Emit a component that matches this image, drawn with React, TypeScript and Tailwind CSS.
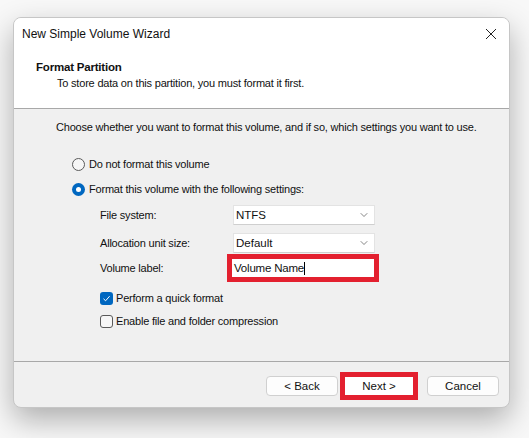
import { ChevronDown } from "lucide-react";

const font = "font-['Liberation_Sans',Arial,sans-serif]";

function Radio({ checked, label }: { checked?: boolean; label: string }) {
  return (
    <div className="flex items-center h-[16px]">
      {checked ? (
        <span className="w-[13px] h-[13px] rounded-full bg-[#0067c0] flex items-center justify-center">
          <span className="w-[5px] h-[5px] rounded-full bg-white" />
        </span>
      ) : (
        <span className="w-[13px] h-[13px] rounded-full border border-[#5a5a5a] bg-[#f6f6f6]" />
      )}
      <span className="ml-[4px]">{label}</span>
    </div>
  );
}

function Check({ checked, label }: { checked?: boolean; label: string }) {
  return (
    <div className="flex items-center h-[16px]">
      {checked ? (
        <span className="w-[13px] h-[13px] rounded-[3px] bg-[#0067c0] flex items-center justify-center">
          <svg width="9" height="9" viewBox="0 0 9 9" fill="none">
            <path d="M1.5 4.8 L3.6 6.8 L7.6 2.2" stroke="white" strokeWidth="1" />
          </svg>
        </span>
      ) : (
        <span className="w-[13px] h-[13px] rounded-[3px] border border-[#5a5a5a] bg-[#f6f6f6]" />
      )}
      <span className="ml-[3px]">{label}</span>
    </div>
  );
}

function Select({ value }: { value: string }) {
  return (
    <div className="w-[142px] h-[20px] bg-white border border-[#e3e3e3] border-b-[#cfcfcf] flex items-center justify-between pl-[2px] pr-[4px]">
      <span className="text-[11.5px] tracking-normal">{value}</span>
      <ChevronDown size={12} strokeWidth={1.3} className="text-[#444]" />
    </div>
  );
}

function Button({ label }: { label: string }) {
  return (
    <div className="w-[72px] h-[20px] rounded-[4px] border border-[#d0d0d0] bg-[#fdfdfd] flex items-center justify-center">
      {label}
    </div>
  );
}

export default function App() {
  return (
    <div className={`w-[529px] h-[438px] bg-[#f8f8f8] pt-[17px] pl-[13px] text-[11px] tracking-[-0.2px] leading-[16px] text-[#111] whitespace-nowrap ${font}`}>
      <div className="w-[497px] h-[391px] rounded-[8px] border border-[#c6c6c6] bg-[#f0f0f0] overflow-hidden flex flex-col shadow-[0_12px_30px_rgba(0,0,0,0.3)]">
        {/* Header */}
        <div className="h-[91px] shrink-0 bg-white border-b border-[#a8a8a8]">
          <div className="flex items-center justify-between pl-[8px] pr-[12px] pt-[8px]">
            <span className="text-[12px] tracking-normal">New Simple Volume Wizard</span>
            <svg width="12" height="12" viewBox="0 0 12 12" fill="none">
              <path d="M1 1 L11 11 M11 1 L1 11" stroke="#222" strokeWidth="1" />
            </svg>
          </div>
          <p className="mt-[17px] ml-[22px] font-bold text-[11.5px]">Format Partition</p>
          <p className="ml-[43px]">To store data on this partition, you must format it first.</p>
        </div>

        {/* Body */}
        <div className="flex-1 pt-[10px]">
          <p className="ml-[42px]">
            Choose whether you want to format this volume, and if so, which settings you want to use.
          </p>
          <div className="ml-[58px] mt-[21px] flex flex-col gap-[9px]">
            <Radio label="Do not format this volume" />
            <Radio checked label="Format this volume with the following settings:" />
          </div>
          <div className="ml-[86px] mt-[8px]">
            <div className="flex items-center h-[20px]">
              <span className="w-[133px]">File system:</span>
              <Select value="NTFS" />
            </div>
            <div className="flex items-center h-[20px] mt-[8px]">
              <span className="w-[133px]">Allocation unit size:</span>
              <Select value="Default" />
            </div>
            <div className="flex items-center h-[28px] mt-[1px]">
              <span className="w-[127px]">Volume label:</span>
              <div className="border-[5px] border-[#e3202f] bg-white w-[152px] h-[28px] flex items-center pl-[2px]">
                <span className="text-[11.5px]">Volume Name</span>
                <span className="w-px h-[13px] bg-black" />
              </div>
            </div>
            <div className="mt-[8px] flex flex-col gap-[7px]">
              <Check checked label="Perform a quick format" />
              <Check label="Enable file and folder compression" />
            </div>
          </div>
        </div>

        {/* Footer */}
        <div className="h-[46px] shrink-0 border-t border-[#a8a8a8] flex items-start justify-end pt-[10px] pr-[10px] text-[11.5px] tracking-normal">
          <div className="mt-[4px]">
            <Button label="< Back" />
          </div>
          <div className="ml-[2px] w-[78px] h-[28px] border-[5px] border-[#e3202f] bg-white flex items-center justify-center">
            Next &gt;
          </div>
          <div className="ml-[9px] mt-[4px]">
            <Button label="Cancel" />
          </div>
        </div>
      </div>
    </div>
  );
}
